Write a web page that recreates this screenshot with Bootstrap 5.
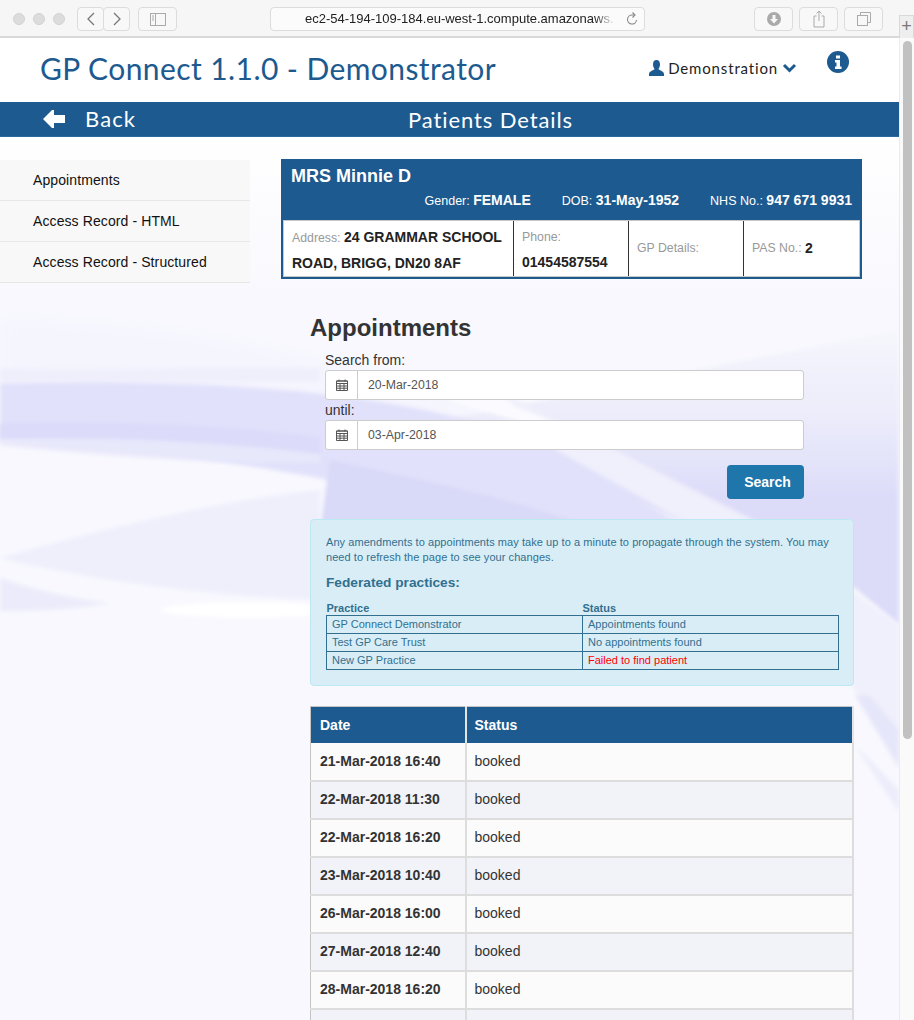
<!DOCTYPE html>
<html lang="en">
<head>
  <meta charset="UTF-8">
  <meta name="viewport" content="width=device-width, initial-scale=1.0">
  <title>GP Connect - Demonstrator</title>
  <link rel="stylesheet" href="https://cdn.jsdelivr.net/npm/bootstrap@5.3.3/dist/css/bootstrap.min.css">
  <style>
    html, body { height: 100%; overflow: hidden; }
    body { background: #fff; color: #333; font-family: "Liberation Sans", Arial, sans-serif; font-size: 14px; }
    /* browser chrome */
    .chrome-bar { height: 38px; background: #f6f6f6; border-bottom: 2px solid #d9d9d9; padding: 7px 0 0 13px; position: relative; }
    .dot { width: 12px; height: 12px; border-radius: 50%; background: #dcdcdc; border: 1px solid #d2d2d2; }
    .dots { gap: 8px; width: 64px; margin-top: 6px; }
    .chrome-btn { height: 24px; border: 1px solid #dcdcdc; border-radius: 4px; background: #f8f8f8; display: flex; align-items: center; justify-content: center; }
    .btn-back { width: 27px; }
    .btn-fwd { width: 27px; margin-left: -1px; margin-right: 8px; }
    .btn-side { width: 39px; }
    .url-box { width: 375px; margin-left: 93px; justify-content: space-between; padding: 0 6px 0 34px; background: #fbfbfb; font-size: 13px; color: #222; white-space: nowrap; overflow: hidden; }
    .url-text { width: 310px; overflow: hidden; -webkit-mask-image: linear-gradient(90deg, #000 290px, transparent 310px); mask-image: linear-gradient(90deg, #000 290px, transparent 310px); }
    .btn-tool { width: 39px; margin-right: 6px; }
    .tools { margin-left: 109px; }
    .tab-plus { position: absolute; right: 0; top: 15px; width: 15px; height: 23px; background: #eeeeee; border: 1px solid #d9d9d9; border-bottom: 0; color: #777; font-size: 18px; line-height: 21px; text-align: center; }
    /* page */
    .page-wrap { height: 982px; }
    .page-main { width: 899px; height: 982px; overflow: hidden; position: relative; flex: none; background: linear-gradient(180deg, #fff 100px, #f8f8fe 260px); }
    .swirl { position: absolute; left: 0; top: 0; }
    .page-inner { position: relative; }
    .scroll-track { width: 15px; background: #fafafa; border-left: 1px solid #ececec; padding: 3px 3px 0 3px; flex: none; }
    .scroll-thumb { width: 9px; height: 698px; background: #c1c1c1; border-radius: 5px; }
    .app-head { height: 64px; background: #fff; padding: 0 0 4px 40px; }
    .app-title { font-family: Lato, sans-serif; font-size: 30px; color: #1d5a8f; margin: 0; font-weight: 400; letter-spacing: .42px; line-height: 60px; }
    .user-box { font-family: Lato, sans-serif; font-size: 15px; color: #222; margin-left: 153px; letter-spacing: .85px; }
    .info-ico { margin-left: 30px; margin-top: -12px; }
    .band { height: 35px; background: #1d5a8f; color: #fff; font-family: Lato, sans-serif; font-size: 22px; position: relative; border-bottom: 1px solid #2a6a9f; }
    .back-link { padding-left: 43px; gap: 20px; letter-spacing: 1.1px; }
    .band-title { position: absolute; left: 82px; right: 0; top: 0; text-align: center; line-height: 35px; letter-spacing: .9px; }
    .content-row { padding-top: 22px; }
    .side-col { width: 250px; flex: none; margin-top: 1px; }
    .side-link { height: 41px; padding: 0 0 0 33px; background: #f8f8f8; border-bottom: 1px solid #e7e7e7; color: #111; font-size: 14px; line-height: 40px; display: block; text-decoration: none; letter-spacing: .1px; }
    .main-col { margin-left: 31px; width: 581px; }
    .patient-card { width: 581px; background: #1d5a8f; color: #fff; border: 0; border-radius: 0; padding: 0 2px 2px 2px; }
    .patient-name { font-size: 18px; font-weight: 700; padding: 6px 8px 0; line-height: 22px; height: 29px; }
    .patient-meta { font-size: 12.5px; height: 32px; gap: 31px; padding: 3px 8px 0 0; line-height: 18px; }
    .patient-meta b { font-size: 14px; }
    .patient-cells { background: #fff; color: #999; font-size: 12.3px; height: 57px; border: 1px solid #c8c8c8; }
    .patient-cells b { color: #222; font-size: 14px; }
    .pcell { border-right: 1px solid #333; padding: 4px 8px; line-height: 25px; }
    .pcell:last-child { border-right: 0; flex-grow: 1; }
    .pc-addr { width: 230px; }
    .pc-fixed { width: 115px; }
    .pc-mid { width: 115px; display: flex; align-items: center; }
    .form-area { margin-left: 29px; width: 544px; }
    .appt-title { font-size: 24px; font-weight: 700; margin: 36px 0 0; line-height: 26px; color: #333; }
    .search-form { margin-left: 15px; width: 479px; padding-top: 9px; }
    .search-form label { display: block; font-size: 14px; line-height: 20px; color: #333; margin: 0; }
    .date-group { height: 30px; }
    .date-group .input-group-text { width: 33px; padding: 0; justify-content: center; background: #fff; border-color: #ccc; border-radius: 3px 0 0 3px; }
    .date-group .form-control { height: 30px; min-height: 30px; font-size: 12.3px; padding: 0 10px; color: #555; border-color: #ccc; border-radius: 0 3px 3px 0; }
    .search-btn { background: #1f76aa; border: 0; color: #fff; font-weight: 700; font-size: 14px; width: 77px; height: 34px; border-radius: 4px; padding: 0 0 0 4px; margin-top: 15px; }
    .fed-alert { margin: 20px 0 20px; padding: 15px 15px 0; background: #d9edf7; border: 1px solid #bce8f1; border-radius: 4px; color: #31708f; font-size: 11px; height: 167px; }
    .fed-alert p { margin: 0; line-height: 15px; letter-spacing: .06px; }
    .fed-alert h6 { font-size: 13.7px; font-weight: 700; color: #31708f; margin: 8px 0 0; line-height: 20px; }
    .fed-table { width: 513px; table-layout: fixed; border-collapse: collapse; margin-top: 9px; color: #31708f; font-size: 11px; }
    .fed-table th { line-height: 12px; padding: 0 0 1px; }
    .fed-table td { border: 1px solid #31708f; padding: 0 5px; line-height: 17px; }
    .fed-table .fed-fail { color: #f00; }
    .appt-table { width: 544px; margin: 0; table-layout: fixed; border: 1px solid #c4c4c4; border-collapse: collapse; }
    .appt-table th { background: #1d5a8f; color: #fff; font-size: 14px; height: 36px; padding: 1px 8px 0; border-right: 2px solid #e4e4e4; border-bottom: 0; vertical-align: middle; }
    .appt-table td { height: 38px; padding: 0 8px; background: #fbfbfb; font-size: 14px; color: #333; border-right: 2px solid #ddd; border-bottom: 2px solid #ddd; vertical-align: middle; box-shadow: none; }
    .appt-table tr:nth-child(even) td { background: #f1f3f8; }
    .appt-table td:first-child { font-weight: 700; padding-left: 9px; }
    .appt-table th:first-child { width: 155px; padding-left: 9px; }
  </style>
</head>
<body>
  <div class="chrome-bar d-flex">
    <div class="dots d-flex"><span class="dot"></span><span class="dot"></span><span class="dot"></span></div>
    <div class="chrome-btn btn-back"><svg width="10" height="16" viewBox="0 0 10 16"><path d="M8 2 2 8l6 6" fill="none" stroke="#777" stroke-width="1.3"/></svg></div>
    <div class="chrome-btn btn-fwd"><svg width="10" height="16" viewBox="0 0 10 16"><path d="m2 2 6 6-6 6" fill="none" stroke="#777" stroke-width="1.3"/></svg></div>
    <div class="chrome-btn btn-side"><svg width="16" height="13" viewBox="0 0 16 13"><rect x=".5" y=".5" width="15" height="12" fill="none" stroke="#aaa"/><path d="M5.5 1v11M2 3h2M2 5h2M2 7h2" stroke="#aaa"/></svg></div>
    <div class="chrome-btn url-box"><span class="url-text">ec2-54-194-109-184.eu-west-1.compute.amazonaws.</span><svg width="12" height="14" viewBox="0 0 12 14"><path d="M10.5 8a4.5 4.5 0 1 1-4.5-5h2" fill="none" stroke="#888" stroke-width="1.1"/><path d="M6.5 .5 9 3 6.5 5.5" fill="none" stroke="#888" stroke-width="1.1"/></svg></div>
    <div class="tools d-flex">
      <div class="chrome-btn btn-tool"><svg width="14" height="14" viewBox="0 0 14 14"><circle cx="7" cy="7" r="7" fill="#aaa"/><path d="M5.5 3h3v4H11l-4 4.500L3 7h2.500z" fill="#f8f8f8"/></svg></div>
      <div class="chrome-btn btn-tool"><svg width="12" height="18" viewBox="0 0 12 18"><path d="M3.500 6H1v11h10V6H8.500M6 11V1M3.500 3.500 6 1l2.500 2.500" fill="none" stroke="#aaa"/></svg></div>
      <div class="chrome-btn btn-tool"><svg width="14" height="14" viewBox="0 0 14 14"><rect x=".5" y="3.500" width="10" height="10" fill="#f8f8f8" stroke="#aaa"/><path d="M3.500 3V.5h10v10H11" fill="none" stroke="#aaa"/></svg></div>
    </div>
    <div class="tab-plus">+</div>
  </div>

  <div class="page-wrap d-flex">
    <div class="page-main">
      <!-- background swirl, coordinates are the same as the window -->
      <svg class="swirl" width="899" height="982" viewBox="0 38 899 982">
        <defs>
          <linearGradient id="gradRight" x1="0" y1="330" x2="0" y2="500" gradientUnits="userSpaceOnUse">
            <stop offset="0" stop-color="#f6f6fd"/>
            <stop offset=".5" stop-color="#ececfb"/>
            <stop offset="1" stop-color="#dcdcf9"/>
          </linearGradient>
          <filter id="soft"><feGaussianBlur stdDeviation="2"/></filter>
          <filter id="softer"><feGaussianBlur stdDeviation="8"/></filter>
        </defs>
        <path d="M0 320C100 320 220 335 320 360L480 400 480 420 0 383Z" fill="#f5f5fe" filter="url(#softer)"/>
        <path d="M0 368C100 372 200 365 320 368V382H0Z" fill="#efeffc" filter="url(#soft)"/>
        <path d="M420 425 899 330V625L855 588 680 520 560 470Z" fill="url(#gradRight)" filter="url(#soft)"/>
        <path d="M0 383C200 380 400 385 560 450L690 530H500C420 490 200 450 0 440Z" fill="#e1e1fb" filter="url(#soft)"/>
        <path d="M0 423C120 420 230 425 320 437V455C220 442 100 437 0 440Z" fill="#dcdcfa" filter="url(#soft)"/>
        <path d="M0 440C100 437 220 442 320 455L320 462C220 465 100 455 0 445Z" fill="#e8e8fb" filter="url(#soft)"/>
        <path d="M330 460C420 480 500 495 600 530H320Z" fill="#d9d9f8" filter="url(#soft)"/>
        <path d="M500 392 753 520 899 625V770L855 690 680 520 557 450Z" fill="#f0f0fc" filter="url(#soft)"/>
        <path d="M470 388 560 425 530 425 450 400Z" fill="#fbfbff" filter="url(#soft)"/>
        <path d="M0 558C100 530 220 500 320 490V600C200 595 90 580 0 558Z" fill="#efeffc" filter="url(#soft)"/>
        <path d="M0 578C40 592 80 600 110 603 70 610 30 611 0 611Z" fill="#ebebfb" filter="url(#soft)"/>
        <ellipse cx="250" cy="610" rx="90" ry="8" fill="#fff" filter="url(#soft)"/>
        <path d="M855 695H870L899 730V766Z" fill="#e6e6fa" filter="url(#soft)"/>
        <path d="M855 745 899 790V812Z" fill="#ececfb" filter="url(#soft)"/>
      </svg>
      <div class="page-inner">
        <div class="app-head d-flex align-items-center">
          <h1 class="app-title">GP Connect 1.1.0 - Demonstrator</h1>
          <div class="user-box d-flex align-items-center gap-1">
            <svg width="15" height="16" viewBox="0 0 15 16"><path d="M7.500 0C10 0 11 2 11 4.500 11 6.500 10 8 9.500 9c0 1.200 5.500 2 5.500 5v2H0v-2c0-3 5.500-3.800 5.500-5C5 8 4 6.500 4 4.500 4 2 5 0 7.500 0z" fill="#1d5a8f"/></svg>
            <span>Demonstration</span>
            <svg width="15" height="10" viewBox="0 0 14 10"><path d="M1.500 2 7 7.500 12.500 2" fill="none" stroke="#1d5a8f" stroke-width="3"/></svg>
          </div>
          <svg class="info-ico" width="22" height="22" viewBox="0 0 22 22"><circle cx="11" cy="11" r="11" fill="#1d5a8f"/><path d="M9 4.500h4v3H9zM8 9h5v6.500h1.500V18h-6.500v-2.500H9.500V11.500H8z" fill="#fff"/></svg>
        </div>
        <div class="band">
          <div class="back-link d-flex align-items-center">
            <svg width="22" height="18" viewBox="0 0 22 18"><path d="M0 9 9 0h2v5h11v8H11v5H9z" fill="#fff"/></svg>
            <span>Back</span>
          </div>
          <div class="band-title">Patients Details</div>
        </div>

        <div class="content-row d-flex">
          <div class="side-col">
            <a class="side-link" href="#">Appointments</a>
            <a class="side-link" href="#">Access Record - HTML</a>
            <a class="side-link" href="#">Access Record - Structured</a>
          </div>
          <div class="main-col">
            <div class="patient-card">
              <div class="patient-name">MRS Minnie D</div>
              <div class="patient-meta d-flex justify-content-end">
                <span>Gender: <b>FEMALE</b></span>
                <span>DOB: <b>31-May-1952</b></span>
                <span>NHS No.: <b>947 671 9931</b></span>
              </div>
              <div class="patient-cells d-flex">
                <div class="pcell pc-addr">Address: <b>24 GRAMMAR SCHOOL ROAD, BRIGG, DN20 8AF</b></div>
                <div class="pcell pc-fixed">Phone: <b>01454587554</b></div>
                <div class="pcell pc-mid">GP Details:</div>
                <div class="pcell pc-mid">PAS No.:&nbsp;<b>2</b></div>
              </div>
            </div>

            <div class="form-area">
              <h2 class="appt-title">Appointments</h2>
              <div class="search-form">
                <label for="dateFrom">Search from:</label>
                <div class="input-group date-group">
                  <span class="input-group-text"><svg width="12" height="12" viewBox="0 0 12 12"><path d="M.5 2h11v9.500H.5z" fill="none" stroke="#555"/><path d="M.5 2h11v2.500H.5zM4 4.500v7M8 4.500v7M.5 7h11M.5 9.200h11M3 .5v2M9 .5v2" fill="none" stroke="#555"/></svg></span>
                  <input id="dateFrom" class="form-control" value="20-Mar-2018">
                </div>
                <label for="dateUntil">until:</label>
                <div class="input-group date-group">
                  <span class="input-group-text"><svg width="12" height="12" viewBox="0 0 12 12"><path d="M.5 2h11v9.500H.5z" fill="none" stroke="#555"/><path d="M.5 2h11v2.500H.5zM4 4.500v7M8 4.500v7M.5 7h11M.5 9.200h11M3 .5v2M9 .5v2" fill="none" stroke="#555"/></svg></span>
                  <input id="dateUntil" class="form-control" value="03-Apr-2018">
                </div>
                <div class="text-end"><button class="btn search-btn" type="button">Search</button></div>
              </div>

              <div class="alert alert-info fed-alert">
                <p>Any amendments to appointments may take up to a minute to propagate through the system. You may need to refresh the page to see your changes.</p>
                <h6>Federated practices:</h6>
                <table class="fed-table">
                  <thead><tr><th>Practice</th><th>Status</th></tr></thead>
                  <tbody>
                    <tr><td>GP Connect Demonstrator</td><td>Appointments found</td></tr>
                    <tr><td>Test GP Care Trust</td><td>No appointments found</td></tr>
                    <tr><td>New GP Practice</td><td class="fed-fail">Failed to find patient</td></tr>
                  </tbody>
                </table>
              </div>

              <table class="table appt-table">
                <thead><tr><th>Date</th><th>Status</th></tr></thead>
                <tbody id="apptRows"></tbody>
              </table>
            </div>
          </div>
        </div>
      </div>
    </div>
    <div class="scroll-track"><div class="scroll-thumb"></div></div>
  </div>
  <script src="https://cdn.jsdelivr.net/npm/bootstrap@5.3.3/dist/js/bootstrap.bundle.min.js"></script>
  <script>
    const rows = ['21-Mar-2018 16:40','22-Mar-2018 11:30','22-Mar-2018 16:20','23-Mar-2018 10:40','26-Mar-2018 16:00','27-Mar-2018 12:40','28-Mar-2018 16:20'];
    // the next row only just shows at the bottom of the window, its text is out of view
    document.getElementById('apptRows').innerHTML = rows.map(d => `<tr><td>${d}</td><td>booked</td></tr>`).join('') + '<tr><td></td><td></td></tr>';
  </script>
</body>
</html>
